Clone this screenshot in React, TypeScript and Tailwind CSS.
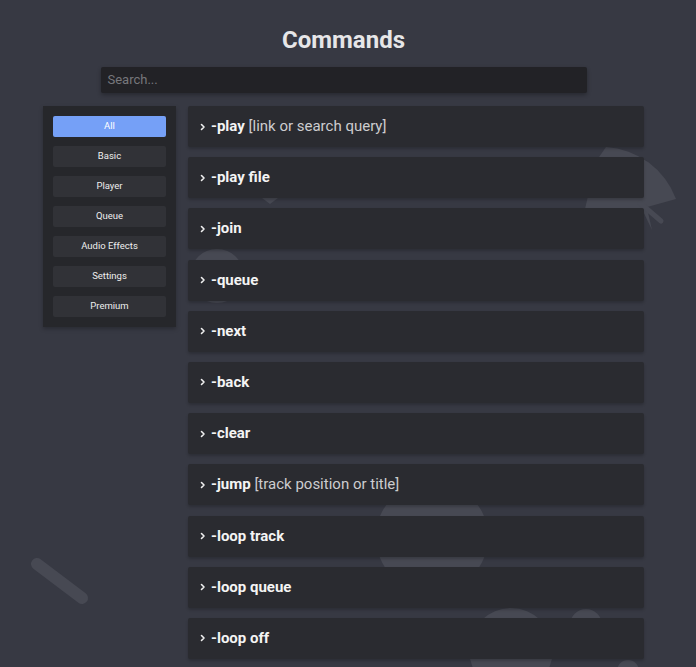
import React from "react";

const cats = ["All", "Basic", "Player", "Queue", "Audio Effects", "Settings", "Premium"];
const cmds: [string, string?][] = [
  ["-play", "[link or search query]"],
  ["-play file"],
  ["-join"],
  ["-queue"],
  ["-next"],
  ["-back"],
  ["-clear"],
  ["-jump", "[track position or title]"],
  ["-loop track"],
  ["-loop queue"],
  ["-loop off"],
];

function Chevron() {
  return (
    <svg width="6" height="8" viewBox="0 0 6 8" className="shrink-0">
      <polyline points="1.5,1.5 4,4 1.5,6.5" fill="none" stroke="#f0f0f0" strokeWidth="1.6" strokeLinecap="round" strokeLinejoin="round" />
    </svg>
  );
}

export default function App() {
  return (
    <div
      className="relative w-full h-[667px] overflow-hidden bg-[#373943]"
      style={{ fontFamily: "Roboto, 'Liberation Sans', sans-serif" }}
    >
      <svg className="absolute inset-0 pointer-events-none" width="696" height="667" viewBox="0 0 696 667">
        <g fill="#474953">
          <path d="M 588 196 L 585 209 L 640 209 L 676 199 A 80 80 0 0 0 606 147 L 597 160 Z" />
          <polygon points="642,209 652,230 647,208" />
          <circle cx="432" cy="537" r="56" />
          <circle cx="511" cy="650" r="42" />
          <circle cx="586" cy="625" r="16" />
          <circle cx="628" cy="671" r="11" />
          <circle cx="217" cy="276" r="27" />
          <polygon points="262,198 278,198 270,204" />
        </g>
        <line x1="640" y1="203" x2="661" y2="221" stroke="#474953" strokeWidth="5" strokeLinecap="round" />
        <line x1="37" y1="564" x2="82" y2="598" stroke="#474953" strokeWidth="12" strokeLinecap="round" />
      </svg>

      <div className="relative w-[687px] flex flex-col items-center pt-[25px]">
        <h1 className="text-[24px] leading-[30px] font-bold text-[#e6e6e8]">Commands</h1>
        <div className="mt-[12px] w-[486px] h-[26px] bg-[#222226] rounded-[2px] shadow-[0_2px_4px_rgba(0,0,0,0.3)] flex items-center px-[7px]">
          <span className="text-[13px] text-[#77777c]">Search...</span>
        </div>
        <div className="mt-[13px] flex items-start gap-[12px] w-[601px]">
          <div className="w-[133px] shrink-0 bg-[#26272b] p-[10px] flex flex-col gap-[9px] shadow-[0_2px_4px_rgba(0,0,0,0.25)]">
            {cats.map((c, i) => (
              <div
                key={c}
                className={
                  i === 0
                    ? "h-[21px] rounded-[2px] bg-[#75a0f7] text-white text-[9.5px] flex items-center justify-center"
                    : "h-[21px] rounded-[2px] bg-[#313237] text-[#eeeeee] text-[9.5px] flex items-center justify-center"
                }
              >
                {c}
              </div>
            ))}
          </div>
          <div className="flex-1 flex flex-col gap-[10.2px]">
            {cmds.map(([name, arg]) => (
              <div
                key={name}
                className="h-[41px] bg-[#2a2b30] rounded-[2px] shadow-[0_2px_3px_rgba(0,0,0,0.2)] flex items-center pl-[12px] gap-[5px]"
              >
                <Chevron />
                <span className="text-[15px] leading-none">
                  <span className="font-bold text-[#f4f4f4]">{name}</span>
                  {arg && <span className="text-[#cdcdcf]"> {arg}</span>}
                </span>
              </div>
            ))}
          </div>
        </div>
      </div>
    </div>
  );
}
